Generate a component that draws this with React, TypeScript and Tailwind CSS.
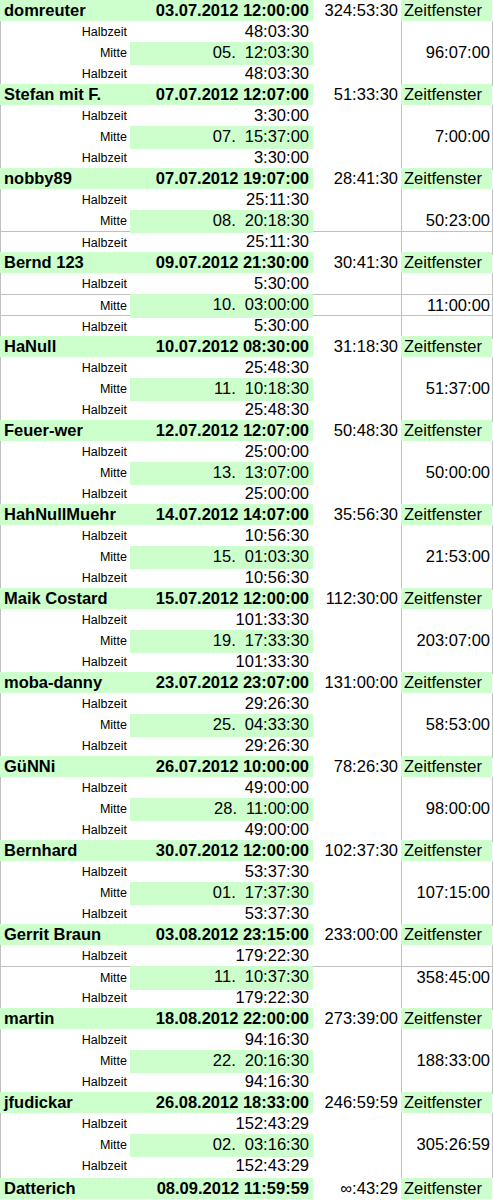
import React from "react";

type G = {
  name: string;
  date: string;
  dur: string;
  half: string;
  day: string;
  mid: string;
  win: string;
  lines?: { h1?: boolean; h2?: boolean; h3?: boolean };
};

const groups: G[] = [
  { name: "domreuter", date: "03.07.2012 12:00:00", dur: "324:53:30", half: "48:03:30", day: "05.", mid: "12:03:30", win: "96:07:00" },
  { name: "Stefan mit F.", date: "07.07.2012 12:07:00", dur: "51:33:30", half: "3:30:00", day: "07.", mid: "15:37:00", win: "7:00:00" },
  { name: "nobby89", date: "07.07.2012 19:07:00", dur: "28:41:30", half: "25:11:30", day: "08.", mid: "20:18:30", win: "50:23:00", lines: { h3: true } },
  { name: "Bernd 123", date: "09.07.2012 21:30:00", dur: "30:41:30", half: "5:30:00", day: "10.", mid: "03:00:00", win: "11:00:00", lines: { h2: true, h3: true } },
  { name: "HaNull", date: "10.07.2012 08:30:00", dur: "31:18:30", half: "25:48:30", day: "11.", mid: "10:18:30", win: "51:37:00" },
  { name: "Feuer-wer", date: "12.07.2012 12:07:00", dur: "50:48:30", half: "25:00:00", day: "13.", mid: "13:07:00", win: "50:00:00" },
  { name: "HahNullMuehr", date: "14.07.2012 14:07:00", dur: "35:56:30", half: "10:56:30", day: "15.", mid: "01:03:30", win: "21:53:00" },
  { name: "Maik Costard", date: "15.07.2012 12:00:00", dur: "112:30:00", half: "101:33:30", day: "19.", mid: "17:33:30", win: "203:07:00" },
  { name: "moba-danny", date: "23.07.2012 23:07:00", dur: "131:00:00", half: "29:26:30", day: "25.", mid: "04:33:30", win: "58:53:00" },
  { name: "GüNNi", date: "26.07.2012 10:00:00", dur: "78:26:30", half: "49:00:00", day: "28.", mid: "11:00:00", win: "98:00:00" },
  { name: "Bernhard", date: "30.07.2012 12:00:00", dur: "102:37:30", half: "53:37:30", day: "01.", mid: "17:37:30", win: "107:15:00" },
  { name: "Gerrit Braun", date: "03.08.2012 23:15:00", dur: "233:00:00", half: "179:22:30", day: "11.", mid: "10:37:30", win: "358:45:00", lines: { h2: true } },
  { name: "martin", date: "18.08.2012 22:00:00", dur: "273:39:00", half: "94:16:30", day: "22.", mid: "20:16:30", win: "188:33:00" },
  { name: "jfudickar", date: "26.08.2012 18:33:00", dur: "246:59:59", half: "152:43:29", day: "02.", mid: "03:16:30", win: "305:26:59" },
];

const font = { fontFamily: '"Liberation Sans", Arial, sans-serif' };

function NameRow({ name, date, dur }: { name: string; date: string; dur: string }) {
  return (
    <div className="grid grid-cols-[313px_88px_92px] h-[21px] text-[16.5px] leading-[21px] text-black">
      <div className="bg-[#ccffcc] flex justify-between pl-[4px] pr-[4px] font-bold whitespace-nowrap">
        <span>{name}</span>
        <span>{date}</span>
      </div>
      <div className="text-right pr-[3px] whitespace-nowrap">{dur}</div>
      <div className="bg-[#ccffcc] pl-[3px] mr-[1px]">Zeitfenster</div>
    </div>
  );
}

function SubRow({
  label,
  mid,
  green,
  win,
  topLine,
}: {
  label: string;
  mid: React.ReactNode;
  green?: boolean;
  win?: string;
  topLine?: boolean;
}) {
  const t = topLine ? "border-t border-[#c0c0c0]" : "";
  return (
    <div className="grid grid-cols-[130px_183px_88px_92px] h-[21px] text-black">
      <div className={`border-l border-[#c0c0c0] text-right pr-[3px] text-[12.5px] leading-[23px] whitespace-nowrap ${t}`}>
        {label}
      </div>
      <div
        className={`${green ? "bg-[#ccffcc]" : ""} flex justify-end pr-[4px] text-[16.5px] leading-[21px] whitespace-nowrap`}
      >
        {mid}
      </div>
      <div className={`${t}`}></div>
      <div
        className={`border-l border-r border-[#c0c0c0] text-right pr-[2px] text-[16.5px] leading-[21px] whitespace-nowrap ${t}`}
      >
        {win ?? ""}
      </div>
    </div>
  );
}

export default function App() {
  return (
    <div className="w-[493px] bg-white overflow-hidden" style={font}>
      {groups.map((g) => (
        <div key={g.name + g.date}>
          <NameRow name={g.name} date={g.date} dur={g.dur} />
          <SubRow label="Halbzeit" mid={g.half} topLine={g.lines?.h1} />
          <SubRow
            label="Mitte"
            green
            mid={
              <>
                <span>{g.day}</span>
                <span className="ml-[9px]">{g.mid}</span>
              </>
            }
            win={g.win}
            topLine={g.lines?.h2}
          />
          <SubRow label="Halbzeit" mid={g.half} topLine={g.lines?.h3} />
        </div>
      ))}
      <div className="mt-[2px]">
        <NameRow name="Datterich" date="08.09.2012 11:59:59" dur="∞:43:29" />
      </div>
    </div>
  );
}
